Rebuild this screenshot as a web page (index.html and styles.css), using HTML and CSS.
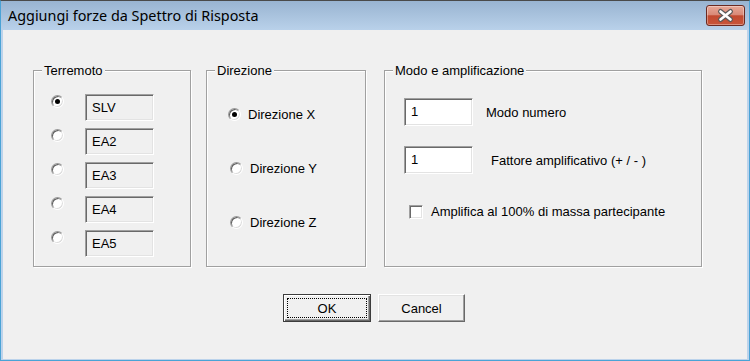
FILE: index.html
```html
<!DOCTYPE html>
<html lang="it">
<head>
    <meta charset="UTF-8">
    <title>Aggiungi forze da Spettro di Risposta</title>
    <link rel="stylesheet" href="styles.css">
</head>
<body>
    <div class="window">
        <!-- Title bar -->
        <div class="titlebar">
            <span class="title">Aggiungi forze da Spettro di Risposta</span>
            <span class="close-btn">
                <svg width="39" height="21" viewBox="0 0 39 21">
                    <path d="M14.5 6.5 L24.5 14.5 M24.5 6.5 L14.5 14.5" stroke="#5a5a5a" stroke-width="5" stroke-linecap="round" fill="none"/>
                    <path d="M14.5 6.5 L24.5 14.5 M24.5 6.5 L14.5 14.5" stroke="#fff" stroke-width="2.6" stroke-linecap="round" fill="none"/>
                </svg>
            </span>
        </div>

        <div class="client">
            <div class="groups">
                <fieldset class="group group-eq">
                    <legend>Terremoto</legend>
                    <div class="eq-list">
                        <div class="eq-row"><span class="radio checked"></span><span class="field">SLV</span></div>
                        <div class="eq-row"><span class="radio"></span><span class="field">EA2</span></div>
                        <div class="eq-row"><span class="radio"></span><span class="field">EA3</span></div>
                        <div class="eq-row"><span class="radio"></span><span class="field">EA4</span></div>
                        <div class="eq-row"><span class="radio"></span><span class="field">EA5</span></div>
                    </div>
                </fieldset>

                <fieldset class="group group-dir">
                    <legend>Direzione</legend>
                    <div class="dir-list">
                        <div class="dir-row first"><span class="radio checked"></span>Direzione X</div>
                        <div class="dir-row"><span class="radio"></span>Direzione Y</div>
                        <div class="dir-row"><span class="radio"></span>Direzione Z</div>
                    </div>
                </fieldset>

                <fieldset class="group group-modo">
                    <legend>Modo e amplificazione</legend>
                    <div class="modo-list">
                        <div class="modo-row"><span class="input">1</span><span class="modo-label">Modo numero</span></div>
                        <div class="modo-row"><span class="input">1</span><span class="modo-label wide">Fattore amplificativo (+ / - )</span></div>
                        <div class="check-row"><span class="checkbox"></span>Amplifica al 100% di massa partecipante</div>
                    </div>
                </fieldset>
            </div>

            <div class="buttons">
                <button class="btn default">OK</button>
                <button class="btn">Cancel</button>
            </div>
        </div>
    </div>
</body>
</html>
```

FILE: styles.css
```css
body {
    margin: 0;
    width: 750px;
    height: 361px;
    overflow: hidden;
    font-family: 'Liberation Sans', Arial, sans-serif;
    font-size: 13px;
    color: #000;
}

/* Window frame */
.window {
    box-sizing: border-box;
    width: 750px;
    height: 361px;
    display: flex;
    flex-direction: column;
    border: 1px solid #4aa3d6;
    border-top-color: #4a4a4a;
    background-color: #bcd3eb;
}

.titlebar {
    height: 29px;
    display: flex;
    align-items: flex-start;
    background: linear-gradient(#99b4d1, #b9d1ea);
}

.title {
    font-family: 'Noto Sans', 'Open Sans', sans-serif;
    font-size: 14.4px;
    line-height: 19px;
    margin: 5px 0 0 7px;
    color: #000;
}

.close-btn {
    box-sizing: border-box;
    width: 39px;
    height: 21px;
    margin: 4px 4px 0 auto;
    border: 1px solid #6b2a22;
    border-radius: 3px;
    background: linear-gradient(#e8a898 0%, #d98a78 45%, #c24a30 52%, #c8553a 100%);
    box-shadow: inset 0 0 0 1px rgba(255, 255, 255, 0.35);
    display: flex;
}

.close-btn svg {
    margin: -1px;
}

.client {
    flex: 1;
    margin: 0 2px 1px 2px;
    background-color: #f0f0f0;
    padding: 33px 0 0 30px;
}

/* Group boxes */
.groups {
    display: flex;
    gap: 15px;
}

.group {
    box-sizing: border-box;
    height: 204px;
    margin: 0;
    padding: 0;
    border: 1px solid #a0a0a0;
    box-shadow: inset 1px 1px 0 #fff, 1px 1px 0 #fff;
}

.group legend {
    margin-left: 8px;
    padding: 0 2px;
    line-height: 15px;
    background-color: #f0f0f0;
}

.group-eq {
    width: 158px;
}

.group-dir {
    width: 160px;
}

.group-modo {
    width: 318px;
    margin-left: 3px;
}

/* Radio buttons */
.radio {
    box-sizing: border-box;
    flex: none;
    position: relative;
    width: 13px;
    height: 13px;
    border-radius: 50%;
    border: 1px solid;
    border-color: #9a9a9a #fff #fff #9a9a9a;
    background-color: #fff;
    box-shadow: inset 1px 1px 0 #5f5f5f, inset -1px -1px 0 #dcdcdc;
}

.radio.checked::after {
    content: "";
    position: absolute;
    left: 3px;
    top: 3px;
    width: 5px;
    height: 5px;
    border-radius: 50%;
    background-color: #000;
}

/* Terremoto */
.eq-list {
    display: flex;
    flex-direction: column;
    gap: 7px;
    padding: 16px 0 0 17px;
}

.eq-row {
    display: flex;
    align-items: flex-start;
}

.eq-row .radio {
    margin-top: 1px;
}

.field {
    box-sizing: border-box;
    width: 69px;
    height: 27px;
    margin-left: 21px;
    padding-left: 6px;
    display: flex;
    align-items: center;
    border: 1px solid;
    border-color: #a0a0a0 #fff #fff #a0a0a0;
    box-shadow: inset 1px 1px 0 #696969, inset -1px -1px 0 #e3e3e3;
}

/* Direzione */
.dir-list {
    display: flex;
    flex-direction: column;
    gap: 38px;
    padding: 28px 0 0 23px;
}

.dir-row {
    display: flex;
    align-items: center;
    gap: 7px;
    height: 16px;
}

.dir-row.first {
    margin-left: -2px;
}

/* Modo e amplificazione */
.modo-list {
    display: flex;
    flex-direction: column;
    gap: 20px;
    padding: 20px 0 0 19px;
}

.modo-row {
    display: flex;
    align-items: center;
}

.input {
    box-sizing: border-box;
    width: 69px;
    height: 28px;
    padding: 0 0 2px 6px;
    display: flex;
    align-items: center;
    background-color: #fff;
    border: 1px solid;
    border-color: #a0a0a0 #fff #fff #a0a0a0;
    box-shadow: inset 1px 1px 0 #696969, inset -1px -1px 0 #e3e3e3;
}

.modo-label {
    margin-left: 13px;
}

.modo-label.wide {
    margin-left: 18px;
}

.check-row {
    display: flex;
    align-items: center;
    gap: 8px;
    margin: 10px 0 0 5px;
}

.checkbox {
    box-sizing: border-box;
    width: 14px;
    height: 14px;
    background-color: #fff;
    border: 1px solid;
    border-color: #a0a0a0 #fff #fff #a0a0a0;
    box-shadow: inset 1px 1px 0 #696969, inset -1px -1px 0 #e3e3e3;
}

/* Dialog buttons */
.buttons {
    display: flex;
    gap: 7px;
    margin: 27px 0 0 250px;
}

.btn {
    box-sizing: border-box;
    position: relative;
    width: 87px;
    height: 28px;
    padding: 0;
    font-family: 'Liberation Sans', Arial, sans-serif;
    font-size: 13px;
    color: #000;
    background-color: #f0f0f0;
    border: 1px solid;
    border-color: #fff #696969 #696969 #fff;
    box-shadow: inset -1px -1px 0 #a0a0a0, inset 1px 1px 0 #e3e3e3;
}

.btn.default {
    width: 88px;
    border-color: #3c3c3c;
    box-shadow: inset 1px 1px 0 #fff, inset -1px -1px 0 #696969, inset -2px -2px 0 #a0a0a0;
}

.btn.default::after {
    content: "";
    position: absolute;
    left: 3px;
    top: 3px;
    right: 3px;
    bottom: 3px;
    border: 1px dotted #000;
}
```
